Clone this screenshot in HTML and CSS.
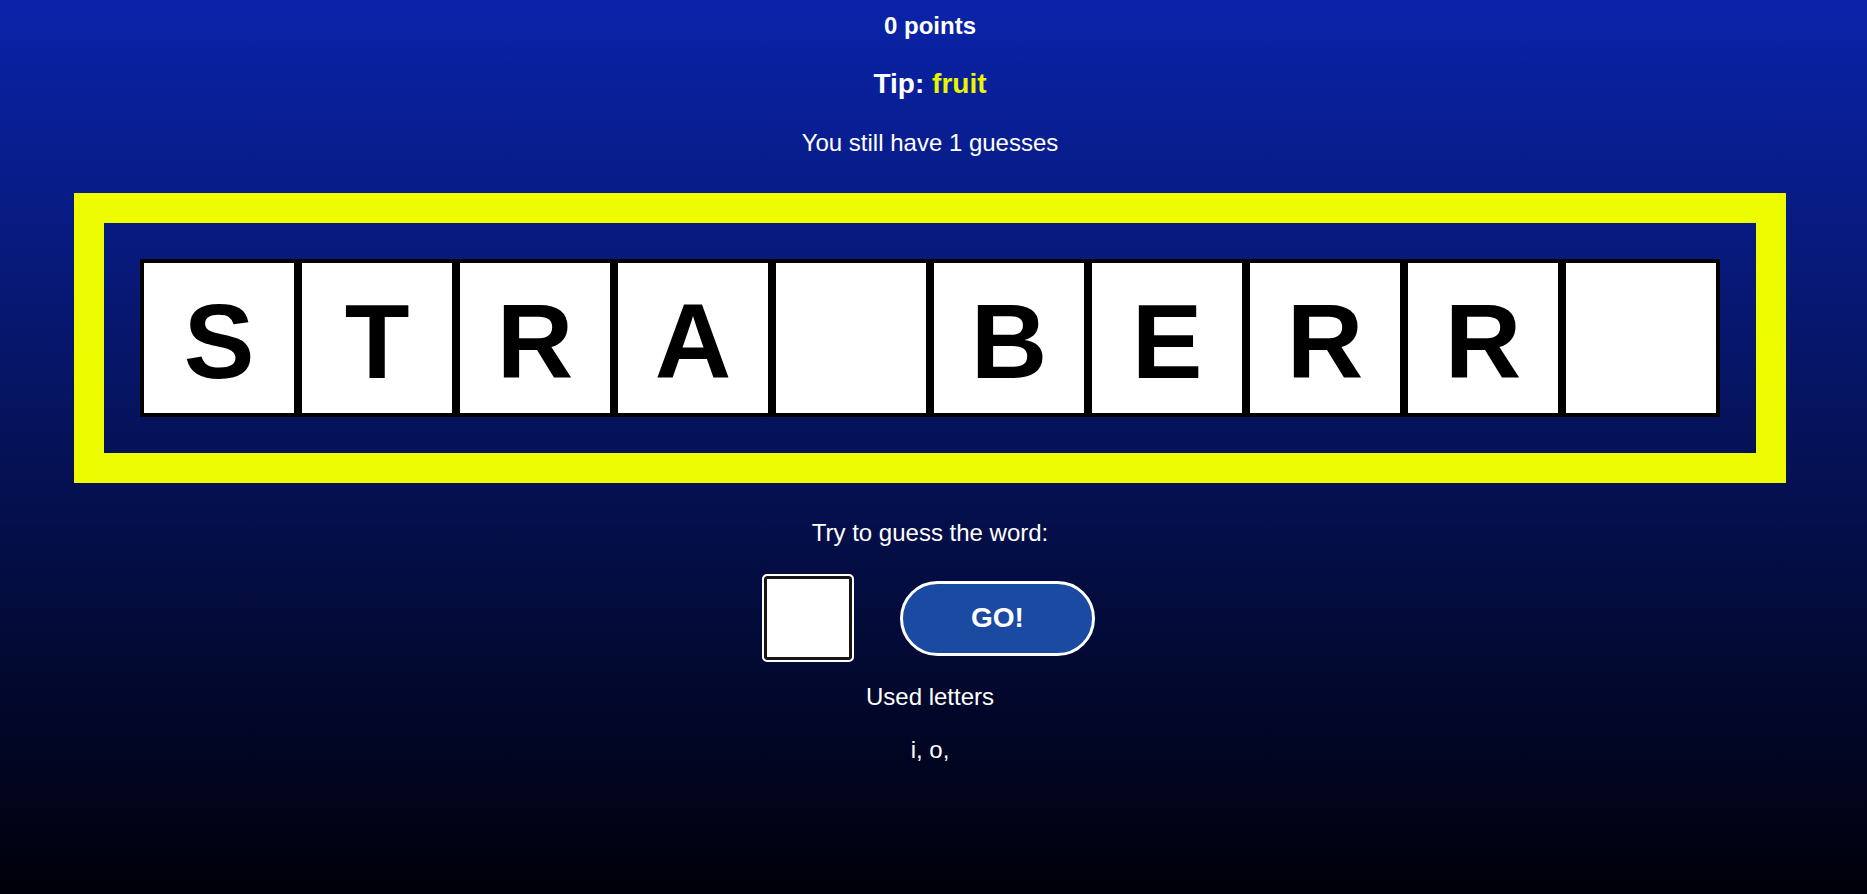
FILE: index.html
```html
<!DOCTYPE html>
<html lang="en">
<head>
<meta charset="utf-8">
<title>Guess the word</title>
<link rel="stylesheet" href="styles.css">
</head>
<body>
<main class="game">
  <p class="points">0 points</p>
  <h2 class="tip">Tip: <span class="tip-word">fruit</span></h2>
  <p class="guesses">You still have 1 guesses</p>

  <section class="board">
    <div class="tiles">
      <div class="tile">S</div>
      <div class="tile">T</div>
      <div class="tile">R</div>
      <div class="tile">A</div>
      <div class="tile"></div>
      <div class="tile">B</div>
      <div class="tile">E</div>
      <div class="tile">R</div>
      <div class="tile">R</div>
      <div class="tile"></div>
    </div>
  </section>

  <p class="prompt">Try to guess the word:</p>
  <form class="guess-form">
    <input class="letter-input" type="text" maxlength="1" aria-label="letter">
    <button class="go" type="button">GO!</button>
  </form>
  <p class="used-title">Used letters</p>
  <p class="used-list">i, o,</p>
</main>
</body>
</html>
```

FILE: styles.css
```css
html, body {
  margin: 0;
  padding: 0;
}

body {
  min-height: 100vh;
  background: linear-gradient(to bottom, #0a23aa 0%, #051258 50%, #00000a 100%);
  font-family: "Liberation Sans", Arial, sans-serif;
  color: #fff;
}

.game {
  width: 1860px;
  padding-top: 12px;
  display: flex;
  flex-direction: column;
  align-items: center;
  text-align: center;
}

.game p,
.game h2 {
  margin: 0;
}

.points {
  font-size: 24px;
  line-height: 28px;
  font-weight: bold;
}

.tip {
  margin-top: 28px !important;
  font-size: 28px;
  line-height: 32px;
  font-weight: bold;
}

.tip-word {
  color: #e9f500;
}

.guesses {
  margin-top: 29px !important;
  font-size: 24px;
  line-height: 28px;
}

.board {
  margin-top: 36px;
  width: 1712px;
  box-sizing: border-box;
  border: 30px solid #eefc00;
  padding: 36px;
}

.tiles {
  display: flex;
}

.tile {
  width: 150px;
  height: 143px;
  padding-top: 7px;
  border: 4px solid #000;
  background: #fff;
  color: #000;
  font-size: 106px;
  line-height: 143px;
  font-weight: bold;
  text-align: center;
}

.prompt {
  margin-top: 36px !important;
  font-size: 24px;
  line-height: 28px;
}

.guess-form {
  margin-top: 27px;
  margin-right: 3px;
  display: flex;
  align-items: center;
  gap: 46px;
}

.letter-input {
  box-sizing: border-box;
  width: 92px;
  height: 88px;
  border: 2px solid #fff;
  border-radius: 5px;
  box-shadow: inset 0 0 0 3px #151515;
  background: #fff;
  font-family: "Liberation Sans", Arial, sans-serif;
  font-size: 40px;
  text-align: center;
  padding: 0;
  outline: none;
}

.go {
  width: 195px;
  height: 75px;
  box-sizing: border-box;
  border: 3px solid #fff;
  border-radius: 38px;
  background: #1b4aa2;
  color: #fff;
  font-family: "Liberation Sans", Arial, sans-serif;
  font-size: 28px;
  font-weight: bold;
  padding: 0;
}

.used-title {
  margin-top: 21px !important;
  font-size: 24px;
  line-height: 28px;
}

.used-list {
  margin-top: 25px !important;
  font-size: 24px;
  line-height: 28px;
}
```
